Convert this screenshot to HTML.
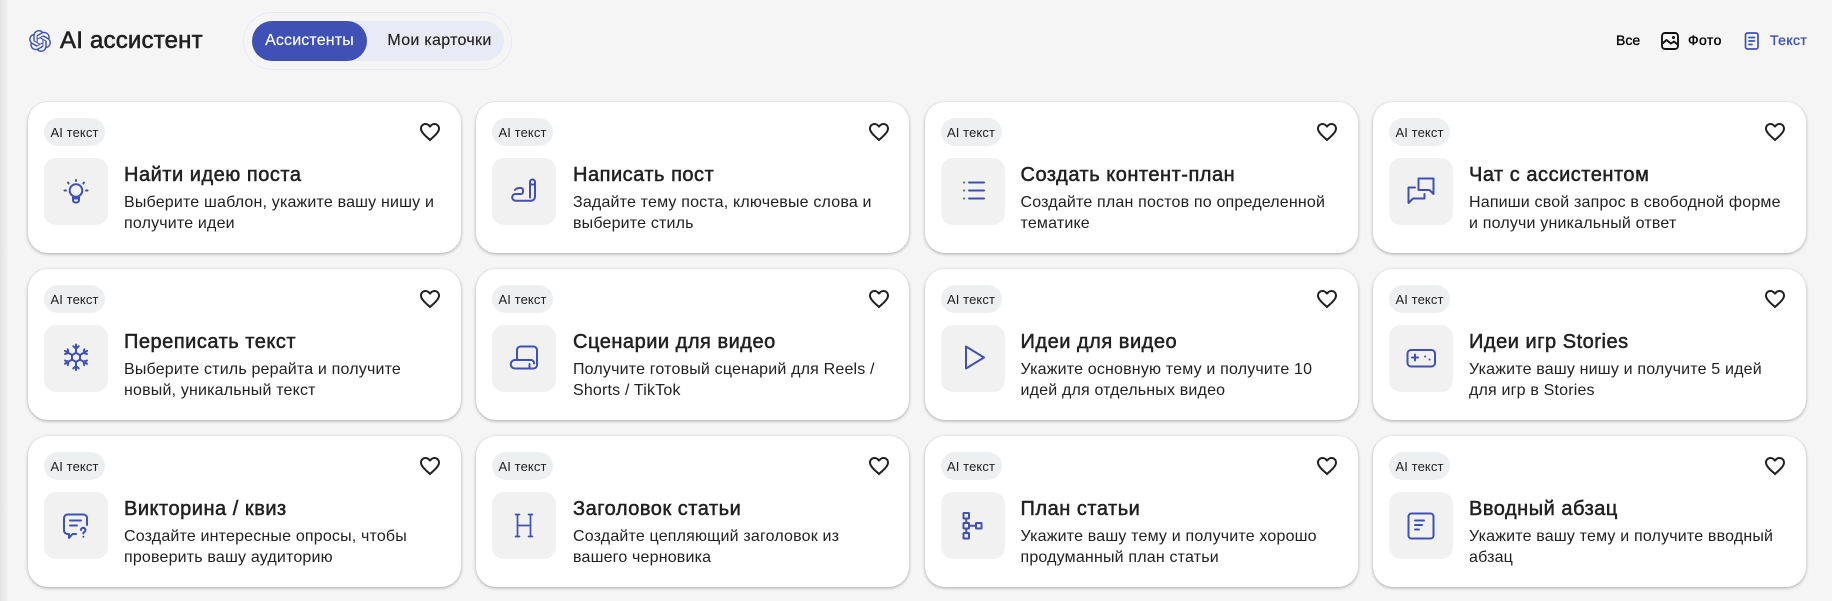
<!DOCTYPE html>
<html lang="ru"><head><meta charset="utf-8"><title>AI ассистент</title>
<style>
html,body{margin:0;padding:0}
body{width:1832px;height:601px;overflow:hidden;background:#f5f5f5;position:relative;font-family:"Liberation Sans",Arial,sans-serif;color:#212121}
.edge{position:absolute;left:0;top:0;width:9px;height:601px;background:linear-gradient(90deg,#e2e2e2,#f5f5f5)}
.abs{position:absolute;white-space:nowrap}
.card{position:absolute;width:433px;height:151px;background:#fff;border-radius:20px;box-shadow:0 1px 3px rgba(0,0,0,.32)}
.tag{position:absolute;left:16px;top:16px;width:61px;height:28px;border-radius:14px;background:#eeeff1;font-size:13px;letter-spacing:.1px;line-height:29px;text-align:center;color:#222}
.heart{position:absolute;right:19px;top:18px;width:24px;height:24px}
.box{position:absolute;left:16px;top:56px;width:64px;height:67px;border-radius:12px;background:#f1f1f1}
.box svg{position:absolute;left:16px;top:17.5px;width:32px;height:32px;fill:none;stroke:#3f51b5;stroke-width:2;stroke-linecap:round;stroke-linejoin:round}
.t{position:absolute;left:96px;top:61px;font-size:20px;letter-spacing:.52px;line-height:24px;color:#212121;-webkit-text-stroke:.5px #212121;white-space:nowrap}
.d{position:absolute;left:96px;top:90px;font-size:16px;letter-spacing:.18px;line-height:21px;color:#212121;white-space:nowrap}
.c2 .t,.c2 .d{left:97px}
.c2 .heart{right:18px}
</style></head><body>
<div class="edge"></div>

<svg class="abs" style="left:29px;top:30px" width="22" height="22" viewBox="0 0 24 24" fill="#3f51b5"><path d="M22.2819 9.8211a5.9847 5.9847 0 0 0-.5157-4.9108 6.0462 6.0462 0 0 0-6.5098-2.9A6.0651 6.0651 0 0 0 4.9807 4.1818a5.9847 5.9847 0 0 0-3.9977 2.9 6.0462 6.0462 0 0 0 .7427 7.0966 5.98 5.98 0 0 0 .511 4.9107 6.051 6.051 0 0 0 6.5146 2.9001A5.9847 5.9847 0 0 0 13.2599 24a6.0557 6.0557 0 0 0 5.7718-4.2058 5.9894 5.9894 0 0 0 3.9977-2.9001 6.0557 6.0557 0 0 0-.7475-7.0729zm-9.022 12.6081a4.4755 4.4755 0 0 1-2.8764-1.0408l.1419-.0804 4.7783-2.7582a.7948.7948 0 0 0 .3927-.6813v-6.7369l2.02 1.1686a.071.071 0 0 1 .038.052v5.5826a4.504 4.504 0 0 1-4.4945 4.4944zm-9.6607-4.1254a4.4708 4.4708 0 0 1-.5346-3.0137l.142.0852 4.783 2.7582a.7712.7712 0 0 0 .7806 0l5.8428-3.3685v2.3324a.0804.0804 0 0 1-.0332.0615L9.74 19.9502a4.4992 4.4992 0 0 1-6.1408-1.6464zM2.3408 7.8956a4.485 4.485 0 0 1 2.3655-1.9728V11.6a.7664.7664 0 0 0 .3879.6765l5.8144 3.3543-2.0201 1.1685a.0757.0757 0 0 1-.071 0l-4.8303-2.7865A4.504 4.504 0 0 1 2.3408 7.872zm16.5963 3.8558L13.1038 8.364 15.1192 7.2a.0757.0757 0 0 1 .071 0l4.8303 2.7913a4.4944 4.4944 0 0 1-.6765 8.1042v-5.6772a.79.79 0 0 0-.407-.667zm2.0107-3.0231l-.142-.0852-4.7735-2.7818a.7759.7759 0 0 0-.7854 0L9.409 9.2297V6.8974a.0662.0662 0 0 1 .0284-.0615l4.8303-2.7866a4.4992 4.4992 0 0 1 6.6802 4.66zM8.3065 12.863l-2.02-1.1638a.0804.0804 0 0 1-.038-.0567V6.0742a4.4992 4.4992 0 0 1 7.3757-3.4537l-.142.0805L8.704 5.459a.7948.7948 0 0 0-.3927.6813zm1.0976-2.3654l2.602-1.4998 2.6069 1.4998v2.9994l-2.5974 1.4997-2.6067-1.4997Z"/></svg>
<div class="abs" style="left:60px;top:26px;font-size:24px;letter-spacing:.2px;line-height:30px;color:#212121;-webkit-text-stroke:.6px #212121">AI ассистент</div>

<div class="abs" style="left:243px;top:12px;width:267px;height:56px;border:1px solid #e8eaf6;border-radius:29px"></div>
<div class="abs" style="left:252px;top:21px;width:252px;height:40px;border-radius:20px;background:#e8eaf6"></div>
<div class="abs" style="left:252px;top:21px;width:115px;height:40px;border-radius:20px;background:#3f51b5;color:#fff;font-size:16px;letter-spacing:.15px;line-height:40px;text-align:center;-webkit-text-stroke:.15px #fff">Ассистенты</div>
<div class="abs" style="left:371px;top:21px;width:137px;height:40px;color:#212121;font-size:16px;letter-spacing:.3px;line-height:40px;text-align:center;-webkit-text-stroke:.15px #212121">Мои карточки</div>

<div class="abs" style="left:1616px;top:31px;font-size:14px;line-height:18px;color:#000;-webkit-text-stroke:.35px #000">Все</div>
<svg class="abs" style="left:1660px;top:31px" width="20" height="20" viewBox="0 0 20 20" fill="none" stroke="#111" stroke-width="1.9" stroke-linejoin="round"><rect x="2" y="2" width="16" height="16" rx="3"/><path d="M2.5 12.5 6.5 9l4.5 3.5 3-2 3.5 3"/><circle cx="13.5" cy="6.5" r=".6" fill="#111"/></svg>
<div class="abs" style="left:1688px;top:31px;font-size:14px;letter-spacing:.4px;line-height:18px;color:#000;-webkit-text-stroke:.35px #000">Фото</div>
<svg class="abs" style="left:1743px;top:31px" width="18" height="20" viewBox="0 0 18 20" fill="none" stroke="#3f51b5" stroke-width="1.7" stroke-linejoin="round" stroke-linecap="round"><rect x="2.5" y="2" width="12.500" height="16" rx="2"/><path d="M6 6.500h5.500M6 10h5.500M6 13.500h3"/></svg>
<div class="abs" style="left:1770px;top:31px;font-size:14px;letter-spacing:.4px;line-height:18px;color:#3f51b5;-webkit-text-stroke:.35px #3f51b5">Текст</div>

<div class="card" style="left:28px;top:102px"><div class="tag">AI текст</div><svg class="heart" viewBox="0 0 24 24"><path fill="#212121" d="M16.5 3c-1.74 0-3.41.81-4.5 2.09C10.91 3.81 9.24 3 7.5 3 4.42 3 2 5.42 2 8.5c0 3.78 3.4 6.86 8.55 11.54L12 21.35l1.45-1.32C18.6 15.36 22 12.28 22 8.5 22 5.42 19.58 3 16.5 3zm-4.4 15.55l-.1.1-.1-.1C7.14 14.24 4 11.39 4 8.5 4 6.5 5.5 5 7.5 5c1.54 0 3.04.99 3.57 2.36h1.87C13.46 5.99 14.96 5 16.5 5c2 0 3.5 1.5 3.5 3.5 0 2.89-3.14 5.74-7.9 10.05z"/></svg>
<div class="box"><svg viewBox="0 0 32 32"><circle cx="16" cy="14.500" r="6.300"/><path d="M13 20.500v3.500a2.500 2.500 0 0 0 2.500 2.500h1a2.500 2.500 0 0 0 2.500-2.500v-3.500M13.500 22.500h5"/><path d="M16 4v1M8 6.500l.6 1M24 6.500l-.6 1M4.500 14.500h1.500M26 14.500h1.500"/></svg></div>
<div class="t">Найти идею поста</div><div class="d">Выберите шаблон, укажите вашу нишу и<br>получите идеи</div></div>

<div class="card c2" style="left:476px;top:102px"><div class="tag">AI текст</div><svg class="heart" viewBox="0 0 24 24"><path fill="#212121" d="M16.5 3c-1.74 0-3.41.81-4.5 2.09C10.91 3.81 9.24 3 7.5 3 4.42 3 2 5.42 2 8.5c0 3.78 3.4 6.86 8.55 11.54L12 21.35l1.45-1.32C18.6 15.36 22 12.28 22 8.5 22 5.42 19.58 3 16.5 3zm-4.4 15.55l-.1.1-.1-.1C7.14 14.24 4 11.39 4 8.5 4 6.5 5.5 5 7.5 5c1.54 0 3.04.99 3.57 2.36h1.87C13.46 5.99 14.96 5 16.5 5c2 0 3.5 1.5 3.5 3.5 0 2.89-3.14 5.74-7.9 10.05z"/></svg>
<div class="box"><svg viewBox="0 0 32 32"><path d="M7 14c1-1.500 3-2 5-2h1a2 2 0 0 1 2 2v2a2 2 0 0 1-2 2H7.500a3.300 3.300 0 0 0 0 6.700H23a4 4 0 0 0 4-4V6a2.500 2.500 0 0 0-5 0v15.500M22 8.500h5"/></svg></div>
<div class="t">Написать пост</div><div class="d">Задайте тему поста, ключевые слова и<br>выберите стиль</div></div>

<div class="card" style="left:924.500px;top:102px"><div class="tag">AI текст</div><svg class="heart" viewBox="0 0 24 24"><path fill="#212121" d="M16.5 3c-1.74 0-3.41.81-4.5 2.09C10.91 3.81 9.24 3 7.5 3 4.42 3 2 5.42 2 8.5c0 3.78 3.4 6.86 8.55 11.54L12 21.35l1.45-1.32C18.6 15.36 22 12.28 22 8.5 22 5.42 19.58 3 16.5 3zm-4.4 15.55l-.1.1-.1-.1C7.14 14.24 4 11.39 4 8.5 4 6.5 5.5 5 7.5 5c1.54 0 3.04.99 3.57 2.36h1.87C13.46 5.99 14.96 5 16.5 5c2 0 3.5 1.5 3.5 3.5 0 2.89-3.14 5.74-7.9 10.05z"/></svg>
<div class="box"><svg viewBox="0 0 32 32"><path d="M12 6.500h15M12 14.500h15M12 22.500h15"/><path d="M7 6.500h.1M7 14.500h.1M7 22.500h.1"/></svg></div>
<div class="t">Создать контент-план</div><div class="d">Создайте план постов по определенной<br>тематике</div></div>

<div class="card" style="left:1373px;top:102px"><div class="tag">AI текст</div><svg class="heart" viewBox="0 0 24 24"><path fill="#212121" d="M16.5 3c-1.74 0-3.41.81-4.5 2.09C10.91 3.81 9.24 3 7.5 3 4.42 3 2 5.42 2 8.5c0 3.78 3.4 6.86 8.55 11.54L12 21.35l1.45-1.32C18.6 15.36 22 12.28 22 8.5 22 5.42 19.58 3 16.5 3zm-4.4 15.55l-.1.1-.1-.1C7.14 14.24 4 11.39 4 8.5 4 6.5 5.5 5 7.5 5c1.54 0 3.04.99 3.57 2.36h1.87C13.46 5.99 14.96 5 16.5 5c2 0 3.5 1.5 3.5 3.5 0 2.89-3.14 5.74-7.9 10.05z"/></svg>
<div class="box"><svg viewBox="0 0 32 32"><path d="M13.500 14V2.500H28.500V18L24.500 14Z"/><path d="M10 11.500H3.500V27L8 22.500H19.500V18"/></svg></div>
<div class="t">Чат с ассистентом</div><div class="d">Напиши свой запрос в свободной форме<br>и получи уникальный ответ</div></div>

<div class="card" style="left:28px;top:269px"><div class="tag">AI текст</div><svg class="heart" viewBox="0 0 24 24"><path fill="#212121" d="M16.5 3c-1.74 0-3.41.81-4.5 2.09C10.91 3.81 9.24 3 7.5 3 4.42 3 2 5.42 2 8.5c0 3.78 3.4 6.86 8.55 11.54L12 21.35l1.45-1.32C18.6 15.36 22 12.28 22 8.5 22 5.42 19.58 3 16.5 3zm-4.4 15.55l-.1.1-.1-.1C7.14 14.24 4 11.39 4 8.5 4 6.5 5.5 5 7.5 5c1.54 0 3.04.99 3.57 2.36h1.87C13.46 5.99 14.96 5 16.5 5c2 0 3.5 1.5 3.5 3.5 0 2.89-3.14 5.74-7.9 10.05z"/></svg>
<div class="box"><svg viewBox="0 0 32 32"><path d="M16 9.800l4 2.300v4.500l-4 2.300-4-2.300v-4.500z"/><g><path d="M16 9.800V1.500M13.300 3.200l2.700 2.400 2.700-2.400"/></g><g transform="rotate(60 16 14.300)"><path d="M16 9.800V1.500M13.300 3.200l2.700 2.400 2.700-2.400"/></g><g transform="rotate(120 16 14.300)"><path d="M16 9.800V1.500M13.300 3.200l2.700 2.400 2.700-2.400"/></g><g transform="rotate(180 16 14.300)"><path d="M16 9.800V1.500M13.300 3.200l2.700 2.400 2.700-2.400"/></g><g transform="rotate(240 16 14.300)"><path d="M16 9.800V1.500M13.300 3.200l2.700 2.400 2.700-2.400"/></g><g transform="rotate(300 16 14.300)"><path d="M16 9.800V1.500M13.300 3.200l2.700 2.400 2.700-2.400"/></g></svg></div>
<div class="t">Переписать текст</div><div class="d">Выберите стиль рерайта и получите<br>новый, уникальный текст</div></div>

<div class="card c2" style="left:476px;top:269px"><div class="tag">AI текст</div><svg class="heart" viewBox="0 0 24 24"><path fill="#212121" d="M16.5 3c-1.74 0-3.41.81-4.5 2.09C10.91 3.81 9.24 3 7.5 3 4.42 3 2 5.42 2 8.5c0 3.78 3.4 6.86 8.55 11.54L12 21.35l1.45-1.32C18.6 15.36 22 12.28 22 8.5 22 5.42 19.58 3 16.5 3zm-4.4 15.55l-.1.1-.1-.1C7.14 14.24 4 11.39 4 8.5 4 6.5 5.5 5 7.5 5c1.54 0 3.04.99 3.57 2.36h1.87C13.46 5.99 14.96 5 16.5 5c2 0 3.5 1.5 3.5 3.5 0 2.89-3.14 5.74-7.9 10.05z"/></svg>
<div class="box"><svg viewBox="0 0 32 32"><path d="M9 16V7a3.500 3.500 0 0 1 3.500-3.500h13A3.500 3.500 0 0 1 29 7v15a3.500 3.500 0 0 1-3.500 3.500H7a4.250 4.250 0 0 1 0-8.500h16a3 3 0 0 1 3 3.500"/><path d="M21.500 25v-4"/></svg></div>
<div class="t">Сценарии для видео</div><div class="d">Получите готовый сценарий для Reels /<br>Shorts / TikTok</div></div>

<div class="card" style="left:924.500px;top:269px"><div class="tag">AI текст</div><svg class="heart" viewBox="0 0 24 24"><path fill="#212121" d="M16.5 3c-1.74 0-3.41.81-4.5 2.09C10.91 3.81 9.24 3 7.5 3 4.42 3 2 5.42 2 8.5c0 3.78 3.4 6.86 8.55 11.54L12 21.35l1.45-1.32C18.6 15.36 22 12.28 22 8.5 22 5.42 19.58 3 16.5 3zm-4.4 15.55l-.1.1-.1-.1C7.14 14.24 4 11.39 4 8.5 4 6.5 5.5 5 7.5 5c1.54 0 3.04.99 3.57 2.36h1.87C13.46 5.99 14.96 5 16.5 5c2 0 3.5 1.5 3.5 3.5 0 2.89-3.14 5.74-7.9 10.05z"/></svg>
<div class="box"><svg viewBox="0 0 32 32"><path d="M9 3.500v22l18-11z"/></svg></div>
<div class="t">Идеи для видео</div><div class="d">Укажите основную тему и получите 10<br>идей для отдельных видео</div></div>

<div class="card" style="left:1373px;top:269px"><div class="tag">AI текст</div><svg class="heart" viewBox="0 0 24 24"><path fill="#212121" d="M16.5 3c-1.74 0-3.41.81-4.5 2.09C10.91 3.81 9.24 3 7.5 3 4.42 3 2 5.42 2 8.5c0 3.78 3.4 6.86 8.55 11.54L12 21.35l1.45-1.32C18.6 15.36 22 12.28 22 8.5 22 5.42 19.58 3 16.5 3zm-4.4 15.55l-.1.1-.1-.1C7.14 14.24 4 11.39 4 8.5 4 6.5 5.5 5 7.5 5c1.54 0 3.04.99 3.57 2.36h1.87C13.46 5.99 14.96 5 16.5 5c2 0 3.5 1.5 3.5 3.5 0 2.89-3.14 5.74-7.9 10.05z"/></svg>
<div class="box"><svg viewBox="0 0 32 32"><rect x="2.500" y="7" width="27.500" height="16.500" rx="3.500"/><path d="M7 14.500h6M10 11.500v6M20 13.500h.1M24.500 16.500h.1"/></svg></div>
<div class="t">Идеи игр Stories</div><div class="d">Укажите вашу нишу и получите 5 идей<br>для игр в Stories</div></div>

<div class="card" style="left:28px;top:436px"><div class="tag">AI текст</div><svg class="heart" viewBox="0 0 24 24"><path fill="#212121" d="M16.5 3c-1.74 0-3.41.81-4.5 2.09C10.91 3.81 9.24 3 7.5 3 4.42 3 2 5.42 2 8.5c0 3.78 3.4 6.86 8.55 11.54L12 21.35l1.45-1.32C18.6 15.36 22 12.28 22 8.5 22 5.42 19.58 3 16.5 3zm-4.4 15.55l-.1.1-.1-.1C7.14 14.24 4 11.39 4 8.5 4 6.5 5.5 5 7.5 5c1.54 0 3.04.99 3.57 2.36h1.87C13.46 5.99 14.96 5 16.5 5c2 0 3.5 1.5 3.5 3.5 0 2.89-3.14 5.74-7.9 10.05z"/></svg>
<div class="box"><svg viewBox="0 0 32 32"><path d="M16 24H12.500L9 28V24H7.500A3.500 3.500 0 0 1 4 20.500V8A3.500 3.500 0 0 1 7.500 4.500h16A3.500 3.500 0 0 1 27 8v7"/><path d="M10 10.500h11M10 15.500h7M21 20a2.200 2.200 0 1 1 3.500 1.800c-.8.500-1.200 1-1.200 1.700M23.300 26.700h.1"/></svg></div>
<div class="t">Викторина / квиз</div><div class="d">Создайте интересные опросы, чтобы<br>проверить вашу аудиторию</div></div>

<div class="card c2" style="left:476px;top:436px"><div class="tag">AI текст</div><svg class="heart" viewBox="0 0 24 24"><path fill="#212121" d="M16.5 3c-1.74 0-3.41.81-4.5 2.09C10.91 3.81 9.24 3 7.5 3 4.42 3 2 5.42 2 8.5c0 3.78 3.4 6.86 8.55 11.54L12 21.35l1.45-1.32C18.6 15.36 22 12.28 22 8.5 22 5.42 19.58 3 16.5 3zm-4.4 15.55l-.1.1-.1-.1C7.14 14.24 4 11.39 4 8.5 4 6.5 5.5 5 7.5 5c1.54 0 3.04.99 3.57 2.36h1.87C13.46 5.99 14.96 5 16.5 5c2 0 3.5 1.5 3.5 3.5 0 2.89-3.14 5.74-7.9 10.05z"/></svg>
<div class="box"><svg viewBox="0 0 32 32" style="stroke-width:1.700"><path d="M9.500 4.500v22M22.500 4.500v22M9.500 15.500h13M7.500 4.500h4M20.500 4.500h4M7.500 26.500h4M20.500 26.500h4"/></svg></div>
<div class="t">Заголовок статьи</div><div class="d">Создайте цепляющий заголовок из<br>вашего черновика</div></div>

<div class="card" style="left:924.500px;top:436px"><div class="tag">AI текст</div><svg class="heart" viewBox="0 0 24 24"><path fill="#212121" d="M16.5 3c-1.74 0-3.41.81-4.5 2.09C10.91 3.81 9.24 3 7.5 3 4.42 3 2 5.42 2 8.5c0 3.78 3.4 6.86 8.55 11.54L12 21.35l1.45-1.32C18.6 15.36 22 12.28 22 8.5 22 5.42 19.58 3 16.5 3zm-4.4 15.55l-.1.1-.1-.1C7.14 14.24 4 11.39 4 8.5 4 6.5 5.5 5 7.5 5c1.54 0 3.04.99 3.57 2.36h1.87C13.46 5.99 14.96 5 16.5 5c2 0 3.5 1.5 3.5 3.5 0 2.89-3.14 5.74-7.9 10.05z"/></svg>
<div class="box"><svg viewBox="0 0 32 32"><rect x="6.500" y="3" width="5.500" height="5.500" rx=".5"/><rect x="6.500" y="13" width="5.500" height="5.500" rx=".5"/><rect x="6.500" y="23" width="5.500" height="5.500" rx=".5"/><rect x="19" y="13" width="5.500" height="5.500" rx=".5"/><path d="M9.250 8.500v4.500M9.250 18.500v4.500M12 15.750h7"/></svg></div>
<div class="t">План статьи</div><div class="d">Укажите вашу тему и получите хорошо<br>продуманный план статьи</div></div>

<div class="card" style="left:1373px;top:436px"><div class="tag">AI текст</div><svg class="heart" viewBox="0 0 24 24"><path fill="#212121" d="M16.5 3c-1.74 0-3.41.81-4.5 2.09C10.91 3.81 9.24 3 7.5 3 4.42 3 2 5.42 2 8.5c0 3.78 3.4 6.86 8.55 11.54L12 21.35l1.45-1.32C18.6 15.36 22 12.28 22 8.5 22 5.42 19.58 3 16.5 3zm-4.4 15.55l-.1.1-.1-.1C7.14 14.24 4 11.39 4 8.5 4 6.5 5.5 5 7.5 5c1.54 0 3.04.99 3.57 2.36h1.87C13.46 5.99 14.96 5 16.5 5c2 0 3.5 1.5 3.5 3.5 0 2.89-3.14 5.74-7.9 10.05z"/></svg>
<div class="box"><svg viewBox="0 0 32 32"><rect x="3.500" y="3.500" width="25" height="25" rx="3"/><path d="M10 10.500h9M10 15h7M10 19.500h4"/></svg></div>
<div class="t">Вводный абзац</div><div class="d">Укажите вашу тему и получите вводный<br>абзац</div></div>
</body></html>
